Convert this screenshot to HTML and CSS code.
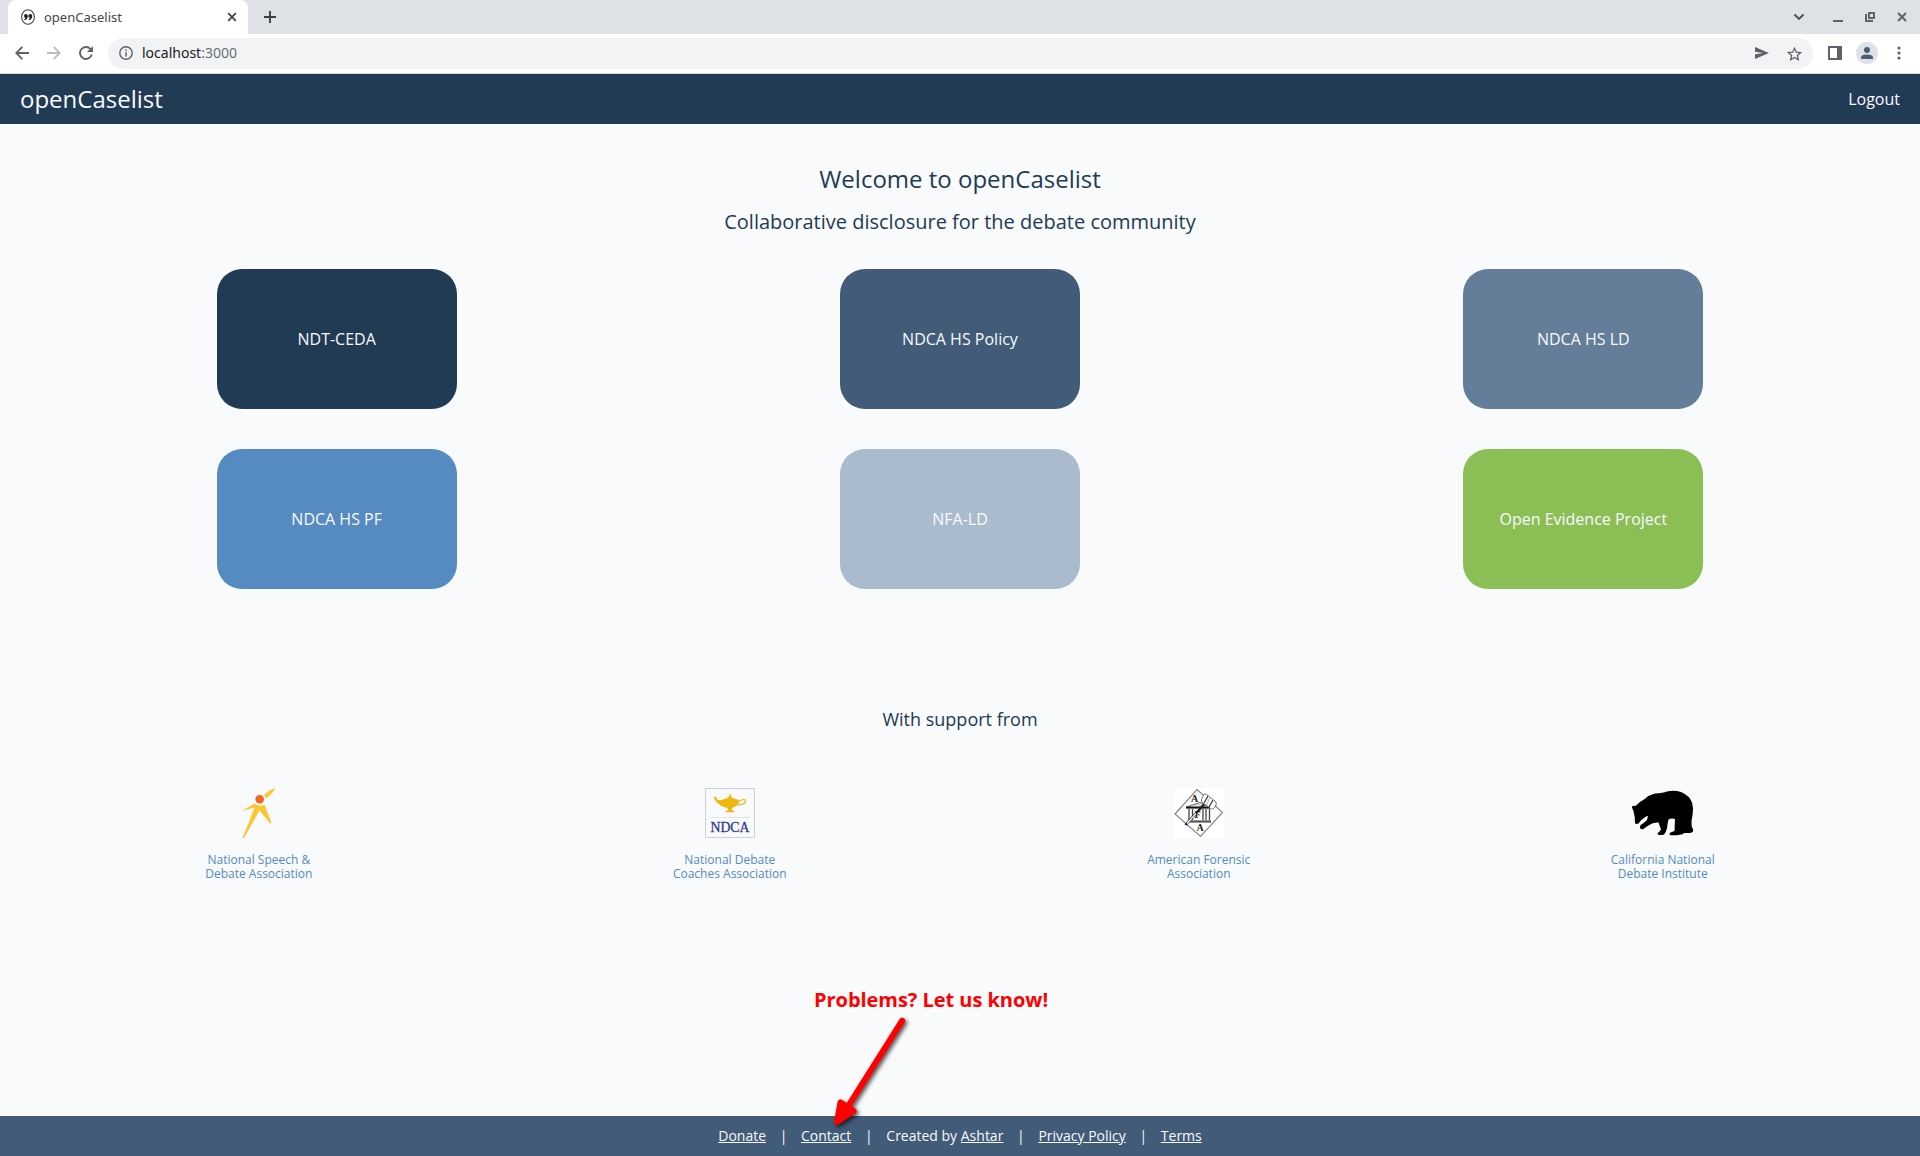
FILE: index.html
```html
<!DOCTYPE html>
<html lang="en">
<head>
<meta charset="utf-8">
<title>openCaselist</title>
<link rel="stylesheet" href="styles.css">
</head>
<body>
<div class="tabstrip">
  <div class="tab">
    <svg class="favicon" viewBox="0 0 14 16"><ellipse cx="7" cy="8" rx="6.400" ry="7.300" fill="#fff" stroke="#444" stroke-width="1.100"/><g fill="#222"><circle cx="4.900" cy="7" r="1.900"/><circle cx="9.300" cy="7" r="1.900"/><path d="M6.800 7q.1 3.400-3.200 4.200l-.4-.9q1.800-.8 1.700-2.300zM11.200 7q.1 3.400-3.200 4.200l-.4-.9q1.800-.8 1.700-2.300z"/></g></svg>
    <span class="tab-title">openCaselist</span>
    <svg class="tab-close" viewBox="0 0 10 10"><path d="M1.200 1.200l7.600 7.600M8.800 1.200l-7.600 7.600" stroke="#3c4043" stroke-width="1.700"/></svg>
  </div>
  <svg class="new-tab" viewBox="0 0 12 12"><path d="M6 0v12M0 6h12" stroke="#3c4043" stroke-width="1.900"/></svg>
  <div class="window-controls">
    <svg class="chevron" width="12" height="12" viewBox="0 0 12 12"><path d="M1.500 3.500l4.500 4.500l4.500-4.500" fill="none" stroke="#4a4d51" stroke-width="1.900"/></svg>
    <svg width="10" height="10" viewBox="0 0 10 10"><path d="M0 9h10" stroke="#5f6368" stroke-width="2"/></svg>
    <svg width="10" height="10" viewBox="0 0 10 10"><path d="M4 1h5v5h-5zM1 2v7h7" fill="none" stroke="#5f6368" stroke-width="2"/></svg>
    <svg width="10" height="10" viewBox="0 0 10 10"><path d="M1 1l8 8M9 1l-8 8" stroke="#5f6368" stroke-width="2"/></svg>
  </div>
</div>
<div class="toolbar">
  <svg class="nav-icon" viewBox="0 0 14 14"><path d="M14 7H1.500M7.300 .8L1.200 7l6.100 6.200" fill="none" stroke="#5f6368" stroke-width="1.800"/></svg>
  <svg class="nav-icon" viewBox="0 0 14 14"><path d="M0 7h12.500M6.700 .8l6.100 6.200l-6.100 6.200" fill="none" stroke="#babcbe" stroke-width="1.800"/></svg>
  <svg class="nav-icon" viewBox="0 0 14 14"><path d="M11.600 3.100A6 6 0 1 0 12.800 8.600" fill="none" stroke="#5f6368" stroke-width="1.900"/><path d="M14 0v6H8z" fill="#5f6368"/></svg>
  <div class="address">
    <svg class="nav-icon" viewBox="0 0 14 14"><circle cx="7" cy="7" r="6.200" fill="none" stroke="#5f6368" stroke-width="1.400"/><path d="M7 6.200v4.300M7 3.400v1.500" stroke="#5f6368" stroke-width="1.500"/></svg>
    <span class="url">localhost<span class="port">:3000</span></span>
    <svg class="send" width="14" height="12" viewBox="0 0 14 12"><path d="M0 0l14 6l-14 6V7.300L8 6L0 4.700z" fill="#5f6368"/></svg>
    <svg width="15" height="14" viewBox="0 0 15 14"><path d="M7.500 1.300l1.800 3.900l4.300.4l-3.200 2.900l.9 4.200l-3.800-2.200l-3.800 2.200l.9-4.200L1.400 5.600l4.300-.4z" fill="none" stroke="#5f6368" stroke-width="1.300"/></svg>
  </div>
  <div class="toolbar-end">
    <svg width="14" height="14" viewBox="0 0 14 14"><path d="M1 1h12v12H1z" fill="#fff" stroke="#5f6368" stroke-width="2"/><path d="M9 1h4v12H9z" fill="#5f6368"/></svg>
    <svg class="avatar" width="22" height="22" viewBox="0 0 22 22"><circle cx="11" cy="11" r="11" fill="#dee1e6"/><circle cx="11" cy="8" r="3" fill="#4e5d78"/><path d="M5 17v-1.500q0-3 6-3t6 3V17z" fill="#4e5d78"/></svg>
    <svg width="4" height="14" viewBox="0 0 4 14" fill="#5f6368"><circle cx="2" cy="2" r="1.600"/><circle cx="2" cy="7" r="1.600"/><circle cx="2" cy="12" r="1.600"/></svg>
  </div>
</div>
<header class="navbar"><span class="brand">openCaselist</span><span class="logout">Logout</span></header>
<main class="content">
  <h1 class="welcome">Welcome to openCaselist</h1>
  <h2 class="subtitle">Collaborative disclosure for the debate community</h2>
  <div class="caselists">
    <div class="caselist ceda">NDT-CEDA</div>
    <div class="caselist policy">NDCA HS Policy</div>
    <div class="caselist ld">NDCA HS LD</div>
    <div class="caselist pf">NDCA HS PF</div>
    <div class="caselist nfa">NFA-LD</div>
    <div class="caselist evidence">Open Evidence Project</div>
  </div>
  <h3 class="support">With support from</h3>
  <div class="sponsors">
    <div class="sponsor">
      <svg width="50" height="50" viewBox="0 0 50 50"><path d="M41.500 0C36 2 32 4.500 30 7L32 10.500C36 7.500 39 4 41.500 0zM21 15.500L8 22.800L20.500 19.800C16 31 12 42 8.300 50H10L25.500 22.500L36.500 35.800L37.500 35L30.500 16.500q-5 3-9.500-1z" fill="#fdc72f"/><circle cx="25.700" cy="11.300" r="6" fill="#f8fafc"/><circle cx="25.700" cy="11.300" r="4.300" fill="#f26522"/></svg>
      <span>National Speech &amp;<br>Debate Association</span>
    </div>
    <div class="sponsor">
      <svg width="50" height="50" viewBox="0 0 50 50"><path d="M.5 .5h49v49H.5z" fill="#f9fafb" stroke="#cdd0d5"/><path d="M5 29.500h40" stroke="#e4e5e8"/><path d="M8.500 7.500L10 9.200L11.500 8.500Q11 11 13.500 12Q16 12.700 19 11Q23 10.500 24 8L24.500 6h1L26 8Q27 10.500 31 11L34.500 12.500Q34 17 28 19.500Q26 20.500 27 22L29.500 23.500V24.300H20.500V23.500L23 22Q24 20.500 21.500 19.700Q15 18 11.500 14Q8.500 11 8.500 7.500z" fill="#efb810"/><path d="M33 13.500Q41 9.500 40.500 13.500Q39.500 17 32 16.800" fill="none" stroke="#efb810" stroke-width="1.200"/><text x="25" y="43.500" text-anchor="middle" textLength="39" lengthAdjust="spacingAndGlyphs" class="ndca">NDCA</text></svg>
      <span>National Debate<br>Coaches Association</span>
    </div>
    <div class="sponsor">
      <svg width="50" height="50" viewBox="0 0 50 50"><path d="M0 0h50v50H0z" fill="#fff"/><path d="M23 1.500L48.500 24.500L26.500 48.500L1 26z" fill="none" stroke="#888" stroke-width="1.200"/><text x="20.500" y="14" text-anchor="middle" class="afa">A</text><text x="26" y="43" text-anchor="middle" class="afa">A</text><path d="M12 19L26 14.500l10 4.500z" fill="#ddd" stroke="#444" stroke-width=".8"/><path d="M12 19.700h24" stroke="#111" stroke-width="1.800"/><path d="M15 33.500h22" stroke="#555" stroke-width="2.200"/><path d="M15 21v11M18.500 21v11M29 21v11M32 21v11M35.500 21v11" stroke="#444" stroke-width="1.300"/><text x="23.500" y="30" text-anchor="middle" class="afa">F</text><path d="M11.500 37L30 16.500" stroke="#222" stroke-width="2.600"/><path d="M13 35.500L22 25.500" stroke="#fff" stroke-width="1.200"/><path d="M29.500 7Q30 5.500 32 6L42 14Q43 16 41 19Q39 22 37.500 21L27.500 14Q26.500 12 29.500 7z" fill="#fff" stroke="#555" stroke-width=".8"/><path d="M34 8l-4 7M39 12l-4 7" stroke="#333" stroke-width="1.200"/><path d="M36 10l-4 7" stroke="#999" stroke-width=".8"/></svg>
      <span>American Forensic<br>Association</span>
    </div>
    <div class="sponsor">
      <svg width="64" height="50" viewBox="0 0 64 50"><path d="M.7 19L2 17.800L4.500 18Q8 14 14 10.700Q18 7 24 5.500Q32 5 36 3.500Q43 2 50 4Q59 8 61 14.500Q62.500 19 61.700 26L60.500 33Q60 38 62 41.500Q63 44 59 45H53Q52 46.500 50 46.500L46 47.300H39.500Q37.500 46 39.500 44.500L43.500 43L44 31Q40 30 37.500 31.500Q36.500 35 36 40Q34.500 46 32 47H27.500Q25.500 45.500 28 44L30 41.500L27.500 34.500Q22 34 17.500 37.500Q15 38.500 12.500 41Q9.500 42 8.800 39.500Q9 36.500 12 35.500L16 32L17 28L15 28.500Q10 31.500 7.500 35.500Q5 36.500 4 35Q4 28 2.500 23z" fill="#000"/></svg>
      <span>California National<br>Debate Institute</span>
    </div>
  </div>
</main>
<div class="callout">
  <div class="callout-text">Problems? Let us know!</div>
  <svg class="arrow" width="90" height="120" viewBox="0 0 90 120"><path d="M71.200 10.700L16 98" stroke="#f00" stroke-width="6" stroke-linecap="round"/><path d="M9.500 92.500L6 112L22.500 101z" fill="#f00" stroke="#f00" stroke-width="6" stroke-linejoin="round"/></svg>
</div>
<footer class="footer"><a>Donate</a><i>|</i><a>Contact</a><i>|</i><span>Created by <a>Ashtar</a></span><i>|</i><a>Privacy Policy</a><i>|</i><a>Terms</a></footer>
</body>
</html>
```

FILE: styles.css
```css
* { box-sizing: border-box; }
body { margin: 0; height: 1156px; display: flex; flex-direction: column; position: relative; overflow: hidden; background: #f8fafc; color: #223b54; font-family: "Open Sans", "Noto Sans", sans-serif; }
svg { display: block; flex: none; }

.tabstrip { height: 34px; flex: none; background: #dee1e6; display: flex; align-items: center; padding-left: 8px; }
.tab { width: 240px; height: 34px; background: #fff; border-radius: 8px 8px 0 0; display: flex; align-items: center; padding: 0 11px 0 13px; font-family: "Noto Sans", sans-serif; }
.favicon { width: 14px; height: 16px; }
.tab-title { font-size: 13px; color: #45484c; flex: 1; margin-left: 9px; }
.tab-close { width: 10px; height: 10px; }
.new-tab { width: 12px; height: 12px; margin-left: 16px; }
.window-controls { margin-left: auto; display: flex; align-items: center; gap: 22px; padding-right: 13px; }
.chevron { margin-right: 6px; }

.toolbar { height: 40px; flex: none; background: #fff; border-bottom: 1px solid #dcdddf; display: flex; align-items: center; gap: 18px; padding: 0 19px 0 15px; }
.nav-icon { width: 14px; height: 14px; margin-bottom: 1px; }
.address { flex: 1; height: 31px; margin: 0 -3px; border-radius: 16px; background: #f1f3f4; display: flex; align-items: center; padding: 0 11px; }
.url { font: 14px "Noto Sans", sans-serif; color: #202124; margin: 0 0 2px 9px; }
.port { color: #6b6f74; }
.send { margin: 0 18px 1px auto; }
.toolbar-end { display: flex; align-items: center; gap: 14px; padding-bottom: 1px; }
.avatar { margin-right: 5px; }

.navbar { height: 50px; flex: none; background: #223b54; color: #f8fafc; display: flex; align-items: center; justify-content: space-between; padding: 0 20px; }
.brand { font-size: 24px; margin-bottom: 2px; }
.logout { font-size: 16px; }

.content { flex: 1; padding: 0 25px; text-align: center; }
h1, h2, h3 { font-weight: 400; margin: 0; }
.welcome { font-size: 24px; line-height: 32px; margin-top: 39px; }
.subtitle { font-size: 20px; line-height: 28px; margin-top: 13px; }
.caselists { display: grid; grid-template-columns: repeat(3, 1fr); gap: 40px 0; justify-items: center; margin-top: 33px; }
.caselist { width: 240px; height: 140px; border-radius: 25px; color: #f8fafc; font-size: 16px; display: flex; align-items: center; justify-content: center; }
.ceda { background: #223b54; }
.policy { background: #415b78; }
.ld { background: #647e99; }
.pf { background: #558bc0; }
.nfa { background: #abbbce; }
.evidence { background: #8bbf56; }
.support { font-size: 18px; line-height: 24px; margin-top: 118px; }
.sponsors { display: flex; justify-content: space-around; margin-top: 57px; }
.sponsor { display: flex; flex-direction: column; align-items: center; gap: 15px; font-size: 12px; line-height: 14px; color: #558bc0; }
.ndca { font: 15px "Liberation Serif", serif; fill: #303f91; stroke: #303f91; stroke-width: .35px; }
.afa { font: bold 10px "Liberation Serif", serif; fill: #222; }

.callout { position: absolute; left: 814px; top: 985px; color: #f00; }
.callout-text { font-size: 20px; line-height: 30px; font-weight: 700; letter-spacing: -.04px; white-space: nowrap; }
.arrow { position: absolute; left: 17px; top: 25px; overflow: visible; filter: drop-shadow(2px 2px 2px rgba(0, 0, 0, .7)); fill: none; }

.footer { height: 40px; flex: none; background: #415b78; color: #f8fafc; font-size: 14px; display: flex; align-items: center; justify-content: center; padding-bottom: 2px; }
.footer a { text-decoration: underline; }
.footer i { font-style: normal; width: 35px; text-align: center; }
```
